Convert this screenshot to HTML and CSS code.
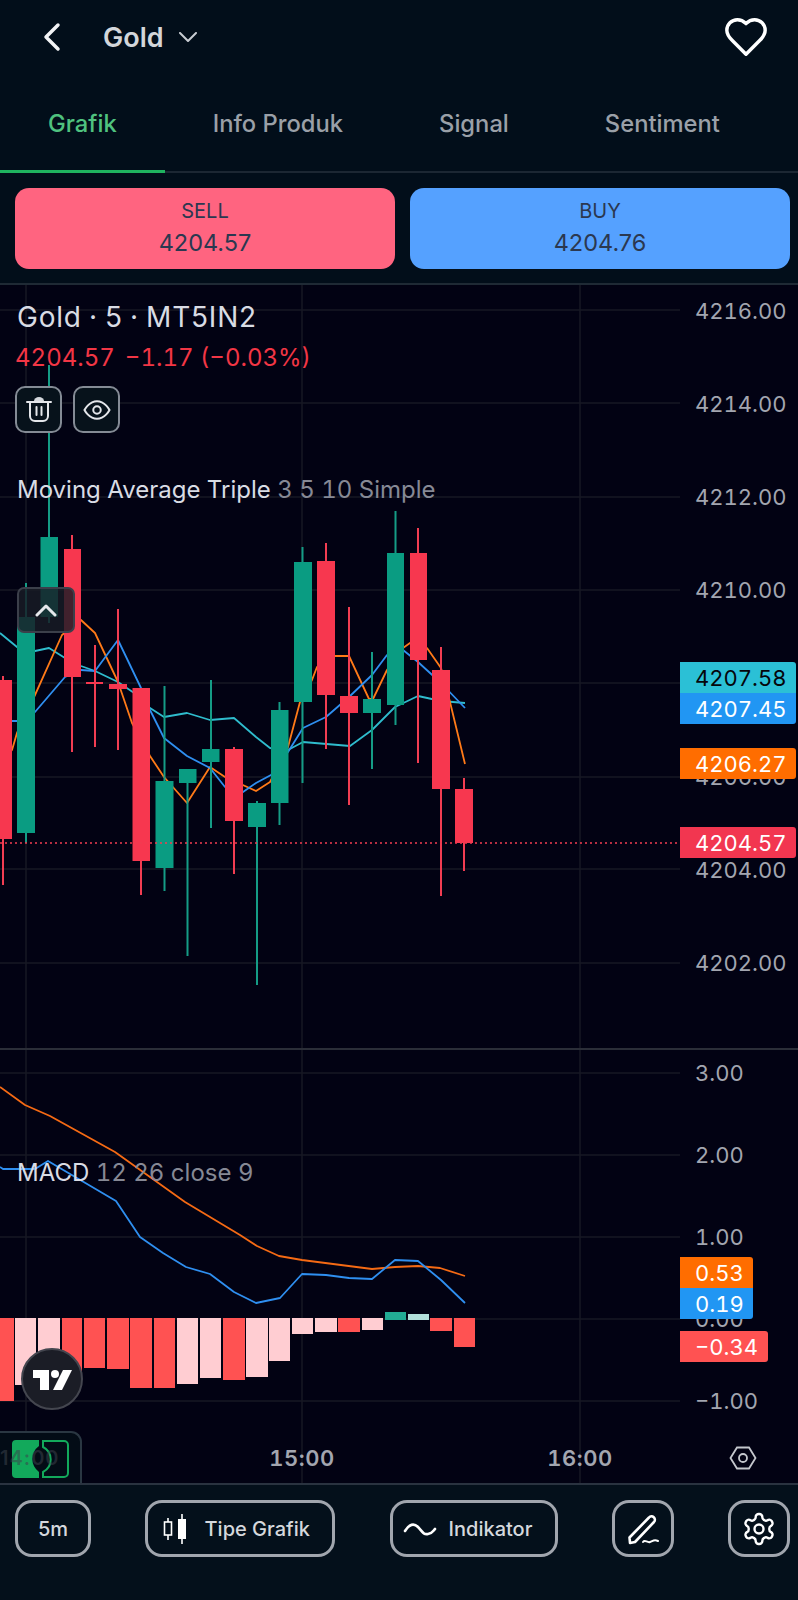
FILE: index.html
```html
<!DOCTYPE html>
<html>
  <head>
    <meta charset="UTF-8" />
    <title>Gold</title>
    <link rel="stylesheet" href="styles.css">
  </head>
  <body>
    <header class="top-bar">
      <svg class="back-icon" width="20" height="30" viewBox="0 0 20 30"><polyline points="16,3 4,15 16,27" /></svg>
      <span class="symbol">Gold</span>
      <svg class="caret-icon" width="20" height="10" viewBox="0 0 20 10"><polyline points="2,1 10,9 18,1" /></svg>
      <svg class="heart-icon" width="46" height="46" viewBox="0 0 24 24"><path d="M19 14c1.49-1.46 3-3.21 3-5.5A5.5 5.5 0 0 0 16.5 3c-1.76 0-3 .5-4.5 2-1.5-1.5-2.74-2-4.5-2A5.5 5.5 0 0 0 2 8.5c0 2.3 1.5 4.05 3 5.5l7 7Z" /></svg>
    </header>

    <nav class="tabs">
      <span class="tab active">Grafik</span>
      <span class="tab">Info Produk</span>
      <span class="tab">Signal</span>
      <span class="tab">Sentiment</span>
    </nav>

    <div class="trade-row">
      <div class="trade-btn sell"><span class="trade-label">SELL</span><span class="trade-price">4204.57</span></div>
      <div class="trade-btn buy"><span class="trade-label">BUY</span><span class="trade-price">4204.76</span></div>
    </div>

    <main class="chart">
      <svg class="chart-canvas" width="798" height="1198" viewBox="0 285 798 1198">
        <!-- grid -->
        <g class="grid">
          <path d="M0 310H680M0 403H680M0 497H680M0 590H680M0 683H680M0 777H680M0 869H680M0 963H680" />
          <path d="M0 1073H680M0 1155H680M0 1237H680M0 1319H680M0 1401H680" />
          <path d="M26 285V1483M302 285V1483M580 285V1483" />
        </g>
        <path class="pane-line" d="M0 1049H798" />

        <!-- moving averages -->
        <polyline class="ma cyan" points="0,633 17,647 35,651 49,648 65,658 81,666 95,671 118,682 140,697 150,708 164,717 187,713 210,720 234,718 256,737 270,748 288,750 303,742 350,746 372,730 395,707 418,696 441,701 465,703" />
        <polyline class="ma orange" points="0,765 12,750 17,733 35,695 62,635 81,620 95,633 118,682 132,723 150,756 164,777 187,803 210,767 225,777 256,791 270,782 288,747 300,702 312,680 317,667 335,656 349,656 369,699 373,699 387,670 403,648 410,643 427,648 441,668 450,702 465,764" />
        <polyline class="ma blue" points="0,721 17,721 35,712 65,677 81,670 95,671 118,640 141,688 150,710 164,738 187,756 210,768 225,787 243,792 256,783 271,775 288,752 303,728 326,717 349,697 372,675 387,655 403,650 418,662 441,683 465,708" />

        <!-- candles -->
        <g class="candles down">
          <path class="wick" d="M3 676V885M72 535V752M95 645V747M118 609V750M141 688V895M234 747V874M326 543V749M349 607V805M418 528V763M441 647V896M464 778V871" />
          <rect x="-6" y="680" width="18" height="159" />
          <rect x="64" y="549" width="17" height="128" />
          <rect x="86" y="682" width="17" height="2" />
          <rect x="109" y="684" width="18" height="5" />
          <rect x="132.500" y="688" width="17.500" height="173" />
          <rect x="225" y="749" width="18" height="72" />
          <rect x="317" y="561" width="18" height="134" />
          <rect x="340" y="696" width="18" height="17" />
          <rect x="410" y="553" width="17" height="107" />
          <rect x="432" y="670" width="18" height="119" />
          <rect x="455" y="789" width="18" height="54" />
        </g>
        <g class="candles up">
          <path class="wick" d="M26 583V843M49 365V623M164.500 686V891M187.500 769V956M211 680V828M257 801V985M279.500 702V825M302.500 547V783M372 652V769M395.500 511V725" />
          <rect x="17" y="617" width="18" height="216" />
          <rect x="40.500" y="537" width="17.500" height="80" />
          <rect x="155.500" y="781" width="18" height="87" />
          <rect x="179" y="769" width="17.500" height="14" />
          <rect x="202" y="749" width="17.500" height="13" />
          <rect x="248" y="803" width="18" height="24" />
          <rect x="271" y="710" width="17.500" height="93" />
          <rect x="294" y="562" width="18" height="140" />
          <rect x="363" y="699" width="18" height="14" />
          <rect x="387" y="553" width="17" height="152" />
        </g>
        <path class="last-line" d="M0 843H680" />

        <!-- price axis -->
        <g class="axis-text">
          <text x="695" y="319">4216.00</text>
          <text x="695" y="412">4214.00</text>
          <text x="695" y="505">4212.00</text>
          <text x="695" y="598">4210.00</text>
          <text x="695" y="785">4206.00</text>
          <text x="695" y="878">4204.00</text>
          <text x="695" y="971">4202.00</text>
          <text x="695" y="1081">3.00</text>
          <text x="695" y="1163">2.00</text>
          <text x="695" y="1245">1.00</text>
          <text x="695" y="1327">0.00</text>
          <text x="695" y="1409">−1.00</text>
        </g>
        <path class="tag-cyan" d="M680 662H793a3 3 0 0 1 3 3V693H680Z" />
        <path class="tag-blue" d="M680 693H796V721a3 3 0 0 1-3 3H680Z" />
        <path class="tag-orange" d="M680 748H793a3 3 0 0 1 3 3V776a3 3 0 0 1-3 3H680Z" />
        <path class="tag-red" d="M680 827H793a3 3 0 0 1 3 3V855a3 3 0 0 1-3 3H680Z" />
        <text class="tag-text dark" x="695" y="686">4207.58</text>
        <text class="tag-text" x="695" y="717">4207.45</text>
        <text class="tag-text" x="695" y="772">4206.27</text>
        <text class="tag-text" x="695" y="851">4204.57</text>

        <!-- macd -->
        <polyline class="macd orange-line" points="0,1087 25,1105 50,1116 115,1152 185,1202 240,1235 257,1246 279,1256 302,1260 372,1269 395,1267 418,1266 440,1268 465,1276" />
        <polyline class="macd blue" points="0,1167 3,1169 35,1169 48,1161 116,1201 140,1237 163,1253 186,1267 210,1274 234,1292 256,1303 280,1298 302,1274 326,1275 349,1278 372,1279 395,1260 418,1261 441,1280 465,1303" />
        <g class="hist-red">
          <rect x="0" y="1318" width="14" height="83" />
          <rect x="62" y="1318" width="20" height="54" />
          <rect x="84" y="1318" width="21" height="50" />
          <rect x="107" y="1318" width="22" height="51" />
          <rect x="130" y="1318" width="22" height="70" />
          <rect x="154" y="1318" width="21" height="70" />
          <rect x="223" y="1318" width="22" height="62" />
          <rect x="338" y="1318" width="22" height="14" />
          <rect x="430" y="1318" width="22" height="13" />
          <rect x="454" y="1318" width="21" height="29" />
        </g>
        <g class="hist-pink">
          <rect x="15" y="1318" width="21" height="67" />
          <rect x="38" y="1318" width="22" height="54" />
          <rect x="177" y="1318" width="21" height="66" />
          <rect x="200" y="1318" width="21" height="60" />
          <rect x="246" y="1318" width="22" height="59" />
          <rect x="269" y="1318" width="21" height="43" />
          <rect x="292" y="1318" width="21" height="16" />
          <rect x="315" y="1318" width="22" height="14" />
          <rect x="362" y="1318" width="21" height="12" />
        </g>
        <rect class="hist-green" x="385" y="1312" width="21" height="8" />
        <rect class="hist-mint" x="408" y="1314" width="21" height="6" />
        <path class="tag-orange" d="M680 1257H750a3 3 0 0 1 3 3V1288H680Z" />
        <path class="tag-blue" d="M680 1288H753V1316a3 3 0 0 1-3 3H680Z" />
        <path class="tag-macd-red" d="M680 1331H765a3 3 0 0 1 3 3V1359a3 3 0 0 1-3 3H680Z" />
        <text class="tag-text" x="695" y="1281">0.53</text>
        <text class="tag-text" x="695" y="1312">0.19</text>
        <text class="tag-text" x="695" y="1355">−0.34</text>

        <!-- time axis -->
        <text class="time-text" x="302" y="1466">15:00</text>
        <text class="time-text" x="580" y="1466">16:00</text>
        <path class="hex-icon" d="M730.500 1458L737 1447.500H749L755.500 1458L749 1468.500H737Z" />
        <circle class="hex-icon" cx="743" cy="1458" r="4" />

        <!-- tradingview badge -->
        <circle class="tv-badge" cx="52" cy="1379" r="30" />
        <path class="tv-logo" d="M33 1370H49V1390H40V1378H33ZM63 1370H72L62 1390H53Z" />
        <circle class="tv-logo" cx="55" cy="1374" r="4" />
      </svg>

      <div class="legend">
        <div class="legend-title">Gold · 5 · MT5IN2</div>
        <div class="legend-quote"><span>4204.57</span><span>−1.17 (−0.03%)</span></div>
        <div class="legend-actions">
          <span class="legend-btn">
            <svg width="26" height="30" viewBox="0 0 26 30">
              <path class="trash-lid" d="M8 6a5 4 0 0 1 10 0Z" />
              <path class="trash-line" d="M1 7H25M4 7V21a5 5 0 0 0 5 5H17a5 5 0 0 0 5-5V7M10.500 12V20M15.500 12V20" />
            </svg>
          </span>
          <span class="legend-btn">
            <svg width="30" height="30" viewBox="0 0 24 24">
              <path class="eye-line" d="M2 12s3.500-7 10-7 10 7 10 7-3.500 7-10 7-10-7-10-7Z" />
              <circle class="eye-line" cx="12" cy="12" r="3" />
            </svg>
          </span>
        </div>
      </div>

      <div class="study-label ma-label">Moving Average Triple <span>3 5 10 Simple</span></div>
      <div class="study-label macd-label">MACD <span>12 26 close 9</span></div>

      <div class="collapse-btn">
        <svg width="24" height="14" viewBox="0 0 24 14"><polyline points="3,12 12,3 21,12" /></svg>
      </div>

      <div class="range-box">
        <svg class="range-handles" width="81" height="51" viewBox="0 0 81 51">
          <path class="handle-left" d="M16 7H39V13A16 16 0 0 0 39 39V45H16a4 4 0 0 1-4-4V11a4 4 0 0 1 4-4Z" />
          <path class="handle-right" d="M43 8H64a4 4 0 0 1 4 4V40a4 4 0 0 1-4 4H43V39A14 14 0 0 0 43 14Z" />
        </svg>
        <span class="range-text">14:00</span>
      </div>
    </main>

    <footer class="toolbar">
      <div class="tool-btn w-time">5m</div>
      <div class="tool-btn w-type">
        <svg width="30" height="32" viewBox="0 0 30 32">
          <path class="candle-line" d="M5 5V27M19 1V31" />
          <rect class="candle-hollow" x="1.500" y="9" width="7" height="13" />
          <rect class="candle-solid" x="15" y="6" width="8" height="20" />
        </svg>
        <span>Tipe Grafik</span>
      </div>
      <div class="tool-btn w-indicator">
        <svg width="34" height="18" viewBox="0 0 34 18"><path class="tool-line" d="M2 11C6 4 11 3 15 7S20 15 25 14 30 11 32 9" /></svg>
        <span>Indikator</span>
      </div>
      <div class="tool-btn w-icon">
        <svg width="34" height="34" viewBox="0 0 34 34">
          <path class="tool-line" d="M4 31L3.500 25.500L23 5.500a3.200 3.200 0 0 1 5 4.500L9 30Z" />
          <path class="tool-line thin" d="M17 30C19 27 21 31 24 30S28 27 32 29" />
        </svg>
      </div>
      <div class="tool-btn w-icon">
        <svg width="36" height="36" viewBox="0 0 24 24">
          <path class="tool-line gear" d="M12.220 2h-.44a2 2 0 0 0-2 2v.18a2 2 0 0 1-1 1.730l-.43.25a2 2 0 0 1-2 0l-.15-.08a2 2 0 0 0-2.730.73l-.22.38a2 2 0 0 0 .73 2.730l.15.1a2 2 0 0 1 1 1.720v.51a2 2 0 0 1-1 1.740l-.15.09a2 2 0 0 0-.73 2.730l.22.38a2 2 0 0 0 2.730.73l.15-.08a2 2 0 0 1 2 0l.43.25a2 2 0 0 1 1 1.730V20a2 2 0 0 0 2 2h.44a2 2 0 0 0 2-2v-.18a2 2 0 0 1 1-1.730l.43-.25a2 2 0 0 1 2 0l.15.08a2 2 0 0 0 2.730-.73l.22-.39a2 2 0 0 0-.73-2.730l-.15-.08a2 2 0 0 1-1-1.740v-.5a2 2 0 0 1 1-1.740l.15-.09a2 2 0 0 0 .73-2.730l-.22-.38a2 2 0 0 0-2.730-.73l-.15.08a2 2 0 0 1-2 0l-.43-.25a2 2 0 0 1-1-1.730V4a2 2 0 0 0-2-2z" />
          <circle class="tool-line gear" cx="12" cy="12" r="3" />
        </svg>
      </div>
    </footer>
  </body>
</html>
```

FILE: styles.css
```css
* {
  box-sizing: border-box;
}

body {
  margin: 0;
  width: 798px;
  height: 1600px;
  overflow: hidden;
  font-family: Inter, 'Noto Sans', sans-serif;
  background: #020e1a;
  color: #d5d8dd;
  display: flex;
  flex-direction: column;
}

/* header */
.top-bar {
  height: 74px;
  display: flex;
  align-items: center;
  padding-left: 42px;
  padding-right: 29px;
}

.back-icon polyline {
  fill: none;
  stroke: #f2f3f5;
  stroke-width: 3.5;
  stroke-linecap: round;
  stroke-linejoin: round;
}

.symbol {
  margin-left: 41px;
  font-size: 27px;
  font-weight: 600;
  color: #d3d6da;
}

.caret-icon {
  margin-left: 14px;
}

.caret-icon polyline {
  fill: none;
  stroke: #c8ccd2;
  stroke-width: 2;
  stroke-linecap: round;
  stroke-linejoin: round;
}

.heart-icon {
  margin-left: auto;
}

.heart-icon path {
  fill: none;
  stroke: #fff;
  stroke-width: 1.8;
  stroke-linejoin: round;
}

/* tabs */
.tabs {
  display: flex;
  height: 99px;
  border-bottom: 2px solid #1c2733;
}

.tab {
  height: 99px;
  padding: 35px 48px 0;
  font-size: 23.750px;
  line-height: 30px;
  font-weight: 500;
  color: #9aa0a8;
  white-space: nowrap;
}

.tab.active {
  color: #4fc27f;
  border-bottom: 3px solid #1fb35f;
}

/* sell and buy */
.trade-row {
  display: flex;
  gap: 15px;
  padding: 15px 8px 14px 15px;
  border-bottom: 2px solid #1f2a35;
}

.trade-btn {
  flex: 1;
  height: 81px;
  border-radius: 14px;
  display: flex;
  flex-direction: column;
  align-items: center;
  padding-top: 11px;
  color: #2b3850;
}

.sell {
  background: #ff6480;
}

.buy {
  background: #55a1ff;
}

.trade-label {
  font-size: 20px;
  line-height: 24px;
}

.trade-price {
  margin-top: 5px;
  font-size: 23.500px;
  line-height: 30px;
}

/* chart */
.chart {
  position: relative;
  height: 1198px;
  background: #020213;
  overflow: hidden;
}

.chart-canvas {
  display: block;
}

.grid path {
  stroke: #171925;
  stroke-width: 1.5;
  fill: none;
}

.pane-line {
  stroke: #2b2e38;
  stroke-width: 2;
}

.ma,
.macd {
  fill: none;
  stroke-width: 1.800;
  stroke-linejoin: round;
}

.cyan {
  stroke: #2fbccd;
}

.orange {
  stroke: #ff7a18;
}

.blue {
  stroke: #2f8ff0;
}

.orange-line {
  stroke: #f56a14;
}

.candles .wick {
  fill: none;
  stroke-width: 2;
}

.down rect {
  fill: #f7374f;
}

.down .wick {
  stroke: #f23d52;
}

.up rect {
  fill: #0a9c82;
}

.up .wick {
  stroke: #159c86;
}

.last-line {
  stroke: #f23d52;
  stroke-width: 1.500;
  stroke-dasharray: 2 3;
}

.axis-text text {
  font-size: 22px;
  font-variant-numeric: tabular-nums;
  fill: #a3a6b0;
}

.tag-text {
  font-size: 22px;
  font-variant-numeric: tabular-nums;
  fill: #fff;
}

.tag-text.dark {
  fill: #05060c;
}

.tag-cyan {
  fill: #2bc0d6;
}

.tag-blue {
  fill: #2196f3;
}

.tag-orange {
  fill: #ff6d00;
}

.tag-red {
  fill: #f23650;
}

.tag-macd-red {
  fill: #ff5252;
}

.hist-red rect {
  fill: #ff5252;
}

.hist-pink rect {
  fill: #ffcdd2;
}

.hist-green {
  fill: #22ab94;
}

.hist-mint {
  fill: #b2dfdb;
}

.time-text {
  font-size: 22px;
  font-weight: 600;
  letter-spacing: 0.5px;
  font-variant-numeric: tabular-nums;
  fill: #a3a6b0;
  text-anchor: middle;
}

.hex-icon {
  fill: none;
  stroke: #c4c7cd;
  stroke-width: 1.800;
}

.tv-badge {
  fill: #1b1d26;
  stroke: #44464f;
  stroke-width: 2;
}

.tv-logo {
  fill: #fff;
}

/* chart overlays */
.legend {
  position: absolute;
  left: 15px;
  top: 14px;
}

.legend-title {
  padding-left: 2px;
  font-size: 28px;
  line-height: 36px;
  letter-spacing: 0.8px;
  word-spacing: -1.500px;
  color: #d9dce4;
}

.legend-quote {
  display: flex;
  gap: 10px;
  margin-top: 8px;
  font-size: 24px;
  line-height: 30px;
  font-variant-numeric: tabular-nums;
  color: #f23645;
}

.legend-actions {
  display: flex;
  gap: 11px;
  margin-top: 13px;
}

.legend-btn {
  width: 47px;
  height: 47px;
  border: 2px solid #848b95;
  border-radius: 10px;
  background: #07121b;
  display: flex;
  align-items: center;
  justify-content: center;
}

.trash-lid {
  fill: #d5d8dd;
}

.trash-line {
  fill: none;
  stroke: #e4e6ea;
  stroke-width: 2;
  stroke-linecap: round;
}

.eye-line {
  fill: none;
  stroke: #e4e6ea;
  stroke-width: 1.600;
}

.study-label {
  position: absolute;
  left: 17px;
  font-size: 24px;
  line-height: 30px;
  font-variant-numeric: tabular-nums;
  color: #d9dce4;
  white-space: nowrap;
}

.study-label span {
  color: #868995;
}

.ma-label {
  top: 190px;
}

.macd-label {
  top: 873px;
}

.collapse-btn {
  position: absolute;
  left: 17px;
  top: 302px;
  width: 58px;
  height: 46px;
  border: 2px solid #3b3f4a;
  border-radius: 7px;
  background: rgba(24, 28, 38, 0.82);
  display: flex;
  align-items: center;
  justify-content: center;
}

.collapse-btn polyline {
  fill: none;
  stroke: #e6e8ec;
  stroke-width: 3;
  stroke-linecap: round;
  stroke-linejoin: round;
}

.range-box {
  position: absolute;
  left: 0;
  bottom: 0;
  width: 82px;
  height: 52px;
  background: #030c16;
  border: 2px solid #2a3742;
  border-left: none;
  border-bottom: none;
  border-top-right-radius: 11px;
}

.range-handles {
  display: block;
}

.handle-left {
  fill: #12a95b;
}

.handle-right {
  fill: none;
  stroke: #12a95b;
  stroke-width: 2;
}

.range-text {
  position: absolute;
  left: 0;
  top: 11px;
  font-size: 20px;
  line-height: 28px;
  letter-spacing: 1px;
  font-weight: 600;
  color: rgba(60, 66, 76, 0.55);
}

/* bottom toolbar */
.toolbar {
  flex: 1;
  display: flex;
  justify-content: space-between;
  align-items: flex-start;
  padding: 15px 8px 0 15px;
  border-top: 2px solid #2a3340;
  background: #04101b;
}

.tool-btn {
  height: 57px;
  border: 3px solid #a1a6ae;
  border-radius: 17px;
  display: flex;
  align-items: center;
  justify-content: center;
  gap: 12px;
  font-size: 20px;
  font-weight: 500;
  color: #d5d8dd;
}

.w-time {
  width: 76px;
}

.w-type {
  width: 190px;
  padding-right: 8px;
}

.w-indicator {
  width: 168px;
  padding-right: 12px;
}

.w-icon {
  width: 62px;
}

.candle-line {
  stroke: #fff;
  stroke-width: 1.600;
  fill: none;
}

.candle-hollow {
  fill: #04101b;
  stroke: #fff;
  stroke-width: 1.600;
}

.candle-solid {
  fill: #fff;
}

.tool-line {
  fill: none;
  stroke: #fff;
  stroke-width: 2.600;
  stroke-linecap: round;
  stroke-linejoin: round;
}

.tool-line.thin {
  stroke-width: 2;
}

.tool-line.gear {
  stroke-width: 1.600;
}
```
